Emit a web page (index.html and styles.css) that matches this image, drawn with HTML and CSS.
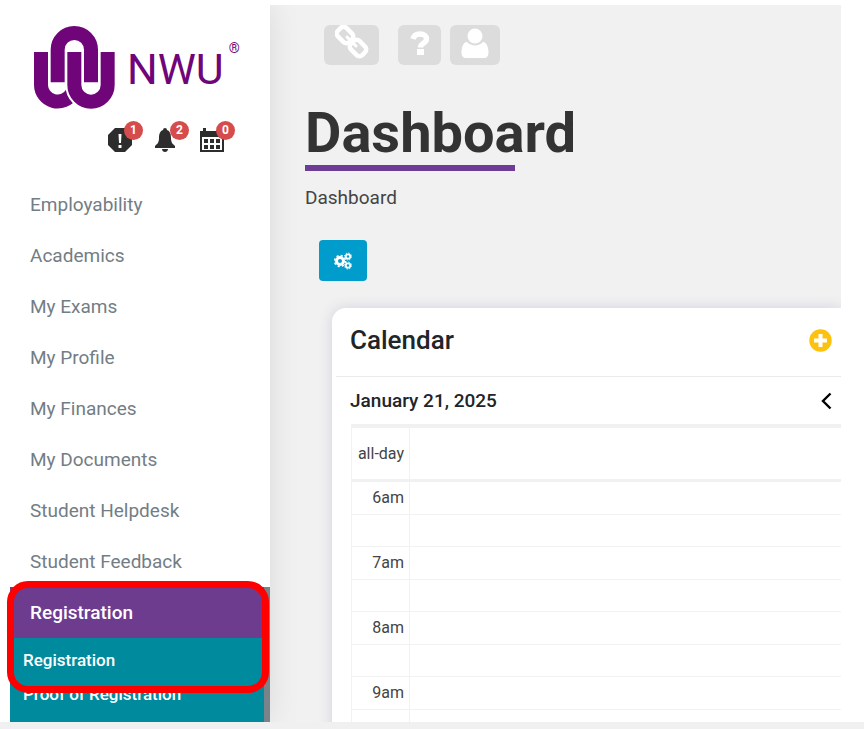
FILE: index.html
```html
<!DOCTYPE html>
<html lang="en">
<head>
    <meta charset="UTF-8">
    <meta name="viewport" content="width=device-width, initial-scale=1.0">
    <title>NWU - Dashboard</title>
    <link rel="stylesheet" href="styles.css">
</head>
<body>
    <div class="page">
        <aside class="sidebar">
            <a href="#" class="logo">
                <svg class="logo-mark" viewBox="0 0 270 270" fill="none" stroke="#6f0579" stroke-width="42" aria-hidden="true">
                    <path d="M83 181V83a50 50 0 0 1 100 0v98"/>
                    <path d="M33 90v99a50 50 0 0 0 93 25"/>
                    <path d="M133 90v99a50 50 0 0 0 100 0V90" stroke="#fff" stroke-width="54"/>
                    <path d="M133 90v99a50 50 0 0 0 100 0V90"/>
                </svg>
                <span class="logo-text">NWU</span>
                <span class="logo-reg">®</span>
            </a>

            <div class="alerts">
                <button class="alert" aria-label="Alerts">
                    <svg width="24" height="26" viewBox="0 0 24 26" aria-hidden="true">
                        <path fill="#2d2d2d" d="M7 1h10l7 7v10l-7 7H7l-7-7V8z"/>
                        <path fill="#fff" d="M10.500 7h3l-.5 9h-2zM10.500 18h3v3h-3z"/>
                    </svg>
                    <span class="badge">1</span>
                </button>
                <button class="alert" aria-label="Notifications">
                    <svg width="24" height="26" viewBox="0 0 24 26" aria-hidden="true">
                        <path fill="#2d2d2d" d="M9 3a2 2 0 0 1 4 0c3 1 4 4 4 8 0 5 2 6 4 8v2H1v-2c2-2 4-3 4-8 0-4 1-7 4-8zM8 22h6c0 4-6 4-6 0z"/>
                    </svg>
                    <span class="badge">2</span>
                </button>
                <button class="alert" aria-label="Events">
                    <svg width="24" height="26" viewBox="0 0 24 26" aria-hidden="true">
                        <path fill="#2d2d2d" fill-rule="evenodd" d="M0 4h3V1h3v3h12V1h3v3h3v21H0zM2 10v13h20V10z"/>
                        <path fill="#2d2d2d" d="M4 12h4v4H4zM10 12h4v4h-4zM16 12h4v4h-4zM4 18h4v4H4zM10 18h4v4h-4zM16 18h4v4h-4z"/>
                    </svg>
                    <span class="badge">0</span>
                </button>
            </div>

            <nav class="menu">
                <a href="#">Employability</a>
                <a href="#">Academics</a>
                <a href="#">My Exams</a>
                <a href="#">My Profile</a>
                <a href="#">My Finances</a>
                <a href="#">My Documents</a>
                <a href="#">Student Helpdesk</a>
                <a href="#">Student Feedback</a>
                <div class="menu-open">
                    <a href="#" class="active">Registration</a>
                    <div class="submenu">
                        <a href="#">Registration</a>
                        <a href="#">Proof of Registration</a>
                    </div>
                    <div class="highlight"></div>
                </div>
            </nav>
        </aside>

        <main class="content">
            <div class="toolbar">
                <button class="tool tool-link" aria-label="Links">
                    <svg width="34" height="34" viewBox="0 0 34 34" fill="none" stroke="#fff" stroke-width="4.500" aria-hidden="true">
                        <rect x="2" y="4" width="16" height="12" rx="4" transform="rotate(45 10 10)"/>
                        <rect x="15" y="17" width="16" height="12" rx="4" transform="rotate(45 23 23)"/>
                        <path d="M12 12l3 3M18 18l3 3" stroke-width="3" stroke-linecap="round"/>
                    </svg>
                </button>
                <button class="tool tool-help" aria-label="Help">
                    <svg width="24" height="34" viewBox="0 0 24 34" aria-hidden="true">
                        <path d="M5 14C6 10 9 9 12 9c4 0 6.500 2 6.500 5 0 4.500-6 4-6 8.500" fill="none" stroke="#fff" stroke-width="5.500"/>
                        <path d="M9 24h7v6H9z" fill="#fff"/>
                    </svg>
                </button>
                <button class="tool tool-user" aria-label="Profile">
                    <svg width="28" height="34" viewBox="0 0 28 34" fill="#fff" aria-hidden="true">
                        <circle cx="14" cy="11" r="7.500"/>
                        <path d="M6 17c4 4.500 12 4.500 16 0 4 0 5.500 6 5.500 11 0 3-2 5-4.500 5H5c-2.500 0-4.500-2-4.500-5 0-5 1.500-11 5.500-11z"/>
                    </svg>
                </button>
            </div>

            <h1>Dashboard</h1>
            <p class="breadcrumb">Dashboard</p>

            <button class="settings" aria-label="Settings">
                <svg width="18" height="18" viewBox="0 0 18 18" fill="none" stroke="#fff" aria-hidden="true">
                    <circle cx="6" cy="9" r="3.500" stroke-width="3"/>
                    <circle cx="6" cy="9" r="5.500" stroke-width="1.500" stroke-dasharray="2.160 2.160"/>
                    <circle cx="14" cy="4.500" r="2.200" stroke-width="1.800"/>
                    <circle cx="14" cy="4.500" r="3.500" stroke-width="1" stroke-dasharray="1.370 1.370"/>
                    <circle cx="14" cy="13.500" r="2.200" stroke-width="1.800"/>
                    <circle cx="14" cy="13.500" r="3.500" stroke-width="1" stroke-dasharray="1.370 1.370"/>
                </svg>
            </button>

            <section class="card">
                <div class="card-header">
                    <h2>Calendar</h2>
                    <button aria-label="Add event">
                        <svg width="23" height="23" viewBox="0 0 23 23" aria-hidden="true">
                            <circle cx="11.500" cy="11.500" r="11.200" fill="#fec10d"/>
                            <path d="M11.500 5v13M5 11.500h13" stroke="#fff" stroke-width="4"/>
                        </svg>
                    </button>
                </div>
                <div class="card-date">
                    <h3>January 21, 2025</h3>
                    <button aria-label="Previous day">
                        <svg width="12" height="18" viewBox="0 0 12 18" aria-hidden="true">
                            <path d="M10.500 1.500L3 9l7.500 7.500" fill="none" stroke="#000" stroke-width="2.400"/>
                        </svg>
                    </button>
                </div>
                <table class="day">
                    <tbody>
                        <tr class="all-day"><th scope="row">all-day</th><td></td></tr>
                        <tr class="hour"><th scope="row">6am</th><td></td></tr>
                        <tr><th></th><td></td></tr>
                        <tr class="hour"><th scope="row">7am</th><td></td></tr>
                        <tr><th></th><td></td></tr>
                        <tr class="hour"><th scope="row">8am</th><td></td></tr>
                        <tr><th></th><td></td></tr>
                        <tr class="hour"><th scope="row">9am</th><td></td></tr>
                        <tr><th></th><td></td></tr>
                    </tbody>
                </table>
            </section>
        </main>
    </div>
</body>
</html>
```
FILE: styles.css
```css
* {
    box-sizing: border-box;
}
body {
    margin: 0;
    height: 100vh;
    display: flex;
    flex-direction: column;
    background-color: #fff;
    border-bottom: 7px solid #f0f0f0;
    font-family: Roboto, Arial, sans-serif;
    color: #212529;
    overflow: hidden;
}
a {
    color: inherit;
    text-decoration: none;
}
button {
    padding: 0;
    border: none;
    background: none;
    font-family: inherit;
    cursor: pointer;
}
svg {
    display: block;
}
.page {
    flex: 1;
    min-height: 0;
    display: flex;
    margin: 5px 23px 0 0;
    overflow: hidden;
}

/* Sidebar */
.sidebar {
    flex: 0 0 270px;
    padding: 17px 0 0 10px;
    background-color: #fff;
    box-shadow: 0 0 30px rgba(0, 0, 0, 0.1);
    z-index: 1;
}
.logo {
    display: flex;
    align-items: flex-start;
    height: 90px;
    padding-left: 20px;
    color: #6f0579;
}
.logo-mark {
    width: 90px;
    height: 90px;
}
.logo-text {
    margin-left: 7px;
    font-size: 43px;
    line-height: 94px;
}
.logo-reg {
    margin-left: 5px;
    font-size: 14px;
    line-height: 52px;
}
.alerts {
    display: flex;
    gap: 22px;
    padding: 15px 0 0 98px;
}
.alert {
    position: relative;
}
.badge {
    position: absolute;
    top: -6px;
    left: 16px;
    width: 19px;
    height: 19px;
    border-radius: 50%;
    background-color: #d64c4c;
    color: #fff;
    font-size: 12px;
    font-weight: bold;
    line-height: 19px;
}
.menu {
    display: flex;
    flex-direction: column;
    padding-top: 26px;
    font-size: 19px;
    color: #737d85;
}
.menu a {
    padding-left: 20px;
    line-height: 51px;
}
.menu-open {
    position: relative;
    display: flex;
    flex-direction: column;
    border-right: 6px solid #78838a;
    color: #fff;
    font-weight: 500;
}
.menu .active {
    background-color: #6d3c8f;
}
.submenu {
    display: flex;
    flex-direction: column;
    padding: 5px 0 40px;
    background-color: #008a9d;
    font-size: 17px;
}
.menu .submenu a {
    padding-left: 13px;
    line-height: 34px;
}
.highlight {
    position: absolute;
    top: -6px;
    left: -3px;
    right: -5px;
    height: 112px;
    border: 7px solid #f00;
    border-radius: 21px;
    pointer-events: none;
}

/* Content */
.content {
    flex: 1;
    min-width: 0;
    padding: 20px 0 0 35px;
    background-color: #f1f1f1;
}
.toolbar {
    display: flex;
    padding-left: 19px;
}
.tool {
    height: 40px;
    display: flex;
    justify-content: center;
    border-radius: 6px;
    background-color: #dcdcdc;
}
.tool-link {
    width: 55px;
}
.tool-help {
    width: 43px;
    margin: 0 9px 0 19px;
}
.tool-user {
    width: 50px;
}
h1 {
    width: 210px;
    margin: 36px 0 0;
    border-bottom: 6px solid #6d3c96;
    font-size: 56px;
    line-height: 64px;
    color: #333;
}
.breadcrumb {
    margin: 15px 0 0;
    font-size: 19px;
    line-height: 24px;
    color: #444;
}
.settings {
    width: 48px;
    height: 41px;
    display: flex;
    align-items: center;
    justify-content: center;
    margin: 30px 0 0 14px;
    border-radius: 4px;
    background-color: #009dcc;
}
.card {
    margin: 27px 0 0 27px;
    background-color: #fff;
    border-radius: 14px 0 0 0;
    box-shadow: 0 0 14px rgba(60, 50, 140, 0.16);
}
.card-header {
    display: flex;
    align-items: center;
    justify-content: space-between;
    height: 69px;
    margin-left: 4px;
    padding: 0 9px 4px 14px;
    border-bottom: 1px solid #e9eaec;
}
h2 {
    margin: 0;
    font-size: 26px;
    font-weight: 500;
}
.card-date {
    display: flex;
    align-items: center;
    justify-content: space-between;
    height: 47px;
    padding: 0 9px 0 18px;
}
h3 {
    margin: 0;
    font-size: 19px;
    font-weight: 500;
}
.day {
    width: calc(100% - 19px);
    margin-left: 19px;
    border-collapse: separate;
    border-spacing: 0;
    border-top: 4px solid #f1f1f1;
    table-layout: fixed;
}
.day th {
    width: 59px;
    height: 32px;
    padding: 0 5px 0 0;
    border: solid #f1f2f3;
    border-width: 0 1px 1px;
    font-size: 16px;
    font-weight: normal;
    line-height: 20px;
    text-align: right;
    color: #444;
}
.day td {
    padding: 0;
    border-bottom: 1px solid #f1f2f3;
}
.day .hour th {
    height: 33px;
}
.day .all-day th {
    height: 54px;
}
.day .all-day th,
.day .all-day td {
    border-bottom: 3px solid #f1f1f1;
}
```
